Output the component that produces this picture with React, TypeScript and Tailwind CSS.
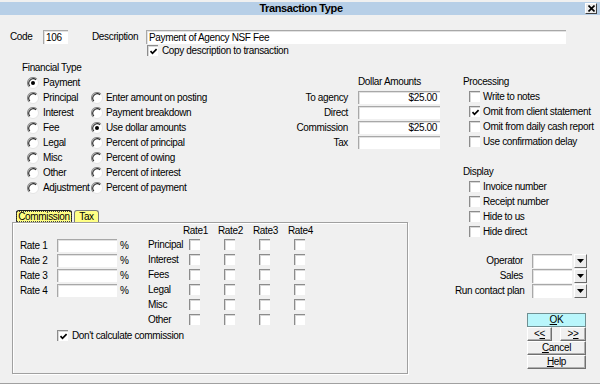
import React from "react";

function Radio({ checked = false }: { checked?: boolean }) {
  return (
    <svg width="12" height="12" viewBox="0 0 12 12" className="shrink-0">
      <circle cx="6" cy="6" r="5.5" fill="#ffffff" />
      <path d="M9.9 2.1 A5.5 5.5 0 0 0 2.1 9.9" stroke="#8a8a8a" strokeWidth="1.1" fill="none" />
      <path d="M9.1 2.9 A4.4 4.4 0 0 0 2.9 9.1" stroke="#2a2a2a" strokeWidth="1.1" fill="none" />
      <path d="M9.9 2.1 A5.5 5.5 0 0 1 2.1 9.9" stroke="#e4e4e4" strokeWidth="1" fill="none" />
      {checked && <circle cx="6" cy="6" r="2" fill="#000000" />}
    </svg>
  );
}

function Check({ checked = false }: { checked?: boolean }) {
  return (
    <div className="w-[11px] h-[11px] shrink-0 bg-white border-t border-l border-[#8c8c8c] shadow-[inset_1px_1px_0_#d8d8d8] flex items-center justify-center">
      {checked && (
        <svg width="9" height="9" viewBox="0 0 9 9">
          <path d="M1.5 4.2 L3.5 6.3 L7.6 2.1" stroke="#000" strokeWidth="1.7" fill="none" />
        </svg>
      )}
    </div>
  );
}

function Field({ w, h = 13, value = "", right = false }: { w: string; h?: number; value?: string; right?: boolean }) {
  return (
    <div
      className={`${w} ${h === 14 ? "h-[14px] leading-[13px]" : "h-[13px] leading-[12px]"} bg-white border-t border-l border-[#a8a8a8] shadow-[inset_1px_1px_0_#e2e2e2] whitespace-nowrap overflow-hidden ${right ? "text-right pr-[3px]" : "pl-[2px]"}`}
    >
      {value}
    </div>
  );
}

function DropBtn() {
  return (
    <div className="ml-[2px] w-[13px] h-[14px] bg-[#ececec] border-t border-l border-white border-b border-r border-b-[#6a6a6a] border-r-[#6a6a6a] flex items-center justify-center">
      <svg width="7" height="4" viewBox="0 0 7 4">
        <path d="M0 0 H7 L3.5 4 Z" fill="#000" />
      </svg>
    </div>
  );
}

function Btn({ children, cls = "" }: { children: React.ReactNode; cls?: string }) {
  return (
    <div
      className={`h-[14px] leading-[12px] text-center bg-[#f0f0f0] border-t border-l border-white border-b border-r border-b-[#707070] border-r-[#707070] shadow-[inset_-1px_-1px_0_#b0b0b0] ${cls}`}
    >
      {children}
    </div>
  );
}

const col1 = ["Payment", "Principal", "Interest", "Fee", "Legal", "Misc", "Other", "Adjustment"];
const col2 = [
  "Enter amount on posting",
  "Payment breakdown",
  "Use dollar amounts",
  "Percent of principal",
  "Percent of owing",
  "Percent of interest",
  "Percent of payment",
];
const dollars: [string, string][] = [
  ["To agency", "$25.00"],
  ["Direct", ""],
  ["Commission", "$25.00"],
  ["Tax", ""],
];
const processing: [string, boolean][] = [
  ["Write to notes", false],
  ["Omit from client statement", true],
  ["Omit from daily cash report", false],
  ["Use confirmation delay", false],
];
const display = ["Invoice number", "Receipt number", "Hide to us", "Hide direct"];
const gridRows = ["Principal", "Interest", "Fees", "Legal", "Misc", "Other"];

export default function App() {
  return (
    <div className="w-[600px] h-[385px] bg-[#f0f0f0] flex flex-col text-[10px] tracking-[-0.35px] text-black font-[family-name:'Liberation_Sans',Arial,sans-serif] overflow-hidden">
      {/* Title bar */}
      <div className="h-[2px]" />
      <div className="h-[13px] bg-[#b7cfe7] flex items-center">
        <div className="flex-1" />
        <span className="font-bold text-[11px] tracking-[-0.4px] leading-[13px] pl-[5px]">Transaction Type</span>
        <div className="flex-1 flex justify-end pr-[3px]">
          <div className="w-[12px] h-[11px] bg-[#ececec] border-t border-l border-white border-b border-r border-b-[#404040] border-r-[#404040] flex items-center justify-center">
            <svg width="7" height="7" viewBox="0 0 7 7">
              <path d="M0.5 0.5 L6.5 6.5 M6.5 0.5 L0.5 6.5" stroke="#000" strokeWidth="1.6" />
            </svg>
          </div>
        </div>
      </div>

      {/* Code / Description */}
      <div className="mt-[15px] h-[14px] flex items-center">
        <div className="ml-[10px] w-[33px] leading-[14px]">Code</div>
        <Field w="w-[25px]" h={14} value="106" />
        <div className="ml-[24px] w-[54px] leading-[14px]">Description</div>
        <Field w="w-[420px]" h={14} value="Payment of Agency NSF Fee" />
      </div>
      <div className="h-[13px] flex items-center pl-[147px]">
        <Check checked />
        <span className="ml-[4px] leading-[13px]">Copy description to transaction</span>
      </div>

      {/* Main */}
      <div className="mt-[3px] flex">
        {/* Left column */}
        <div className="w-[455px] shrink-0 flex flex-col">
          <div className="flex items-start">
            {/* Financial type */}
            <div className="ml-[22px] w-[268px] shrink-0">
              <div className="h-[15px] leading-[15px]">Financial Type</div>
              <div className="flex pl-[5px]">
                <div className="w-[64px] shrink-0">
                  {col1.map((t, i) => (
                    <div key={t} className="h-[15px] flex items-center whitespace-nowrap">
                      <Radio checked={i === 0} />
                      <span className="ml-[4px]">{t}</span>
                    </div>
                  ))}
                </div>
                <div className="pt-[15px]">
                  {col2.map((t, i) => (
                    <div key={t} className="h-[15px] flex items-center whitespace-nowrap">
                      <Radio checked={i === 2} />
                      <span className="ml-[3px]">{t}</span>
                    </div>
                  ))}
                </div>
              </div>
            </div>
            {/* Dollar amounts */}
            <div className="mt-[14px] w-[150px] shrink-0">
              <div className="h-[15px] leading-[15px] pl-[68px]">Dollar Amounts</div>
              <div className="mt-[1px]">
                {dollars.map(([l, v]) => (
                  <div key={l} className="h-[15px] flex items-center">
                    <div className="w-[58px] text-right">{l}</div>
                    <div className="ml-[10px]">
                      <Field w="w-[82px]" value={v} right />
                    </div>
                  </div>
                ))}
              </div>
            </div>
          </div>

          {/* Tabs */}
          <div className="mt-[15px] h-[12px] flex items-end pl-[16px]">
            <div className="w-[56px] h-[12px] bg-[#ffff84] border-t border-l border-r border-[#202020] rounded-t-[3px] flex items-center justify-center">
              <span className="leading-[9px] outline-1 outline-dotted outline-[#404040] px-[1px]">Commission</span>
            </div>
            <div className="ml-[2px] w-[25px] h-[12px] bg-[#ffff84] border-t border-l border-r border-[#7a7a7a] rounded-t-[3px] flex items-center justify-center leading-[10px]">
              Tax
            </div>
          </div>
          <div className="ml-[12px] w-[396px] h-[152px] border border-[#a0a0a0] shadow-[inset_1px_1px_0_#ffffff,1px_1px_0_#ffffff] flex flex-col">
            <div className="flex">
              <div className="w-[135px] shrink-0 pl-[7px] pt-[15px]">
                {[1, 2, 3, 4].map((n) => (
                  <div key={n} className="h-[15px] flex items-center">
                    <div className="w-[37px]">Rate {n}</div>
                    <Field w="w-[60px]" />
                    <span className="ml-[3px]">%</span>
                  </div>
                ))}
              </div>
              <div className="pt-[1px]">
                <div className="h-[13px] leading-[13px] flex pl-[35px]">
                  {[1, 2, 3, 4].map((n) => (
                    <div key={n} className="w-[35px]">Rate{n}</div>
                  ))}
                </div>
                {gridRows.map((r) => (
                  <div key={r} className="h-[15px] flex items-center">
                    <div className="w-[35px] whitespace-nowrap">{r}</div>
                    {[1, 2, 3, 4].map((n) => (
                      <div key={n} className="w-[35px] pl-[6px]">
                        <Check />
                      </div>
                    ))}
                  </div>
                ))}
              </div>
            </div>
            <div className="mt-[1px] h-[15px] flex items-center pl-[44px]">
              <Check checked />
              <span className="ml-[4px]">Don't calculate commission</span>
            </div>
          </div>
        </div>

        {/* Right column */}
        <div className="flex-1 flex flex-col">
          <div className="mt-[14px] h-[15px] leading-[15px] pl-[8px]">Processing</div>
          {processing.map(([t, c]) => (
            <div key={t} className="h-[15px] flex items-center pl-[14px] whitespace-nowrap">
              <Check checked={c} />
              <span className="ml-[3px]">{t}</span>
            </div>
          ))}
          <div className="mt-[15px] h-[15px] leading-[15px] pl-[8px]">Display</div>
          {display.map((t) => (
            <div key={t} className="h-[15px] flex items-center pl-[14px] whitespace-nowrap">
              <Check />
              <span className="ml-[3px]">{t}</span>
            </div>
          ))}
          <div className="mt-[14px]">
            {["Operator", "Sales", "Run contact plan"].map((t) => (
              <div key={t} className="h-[15px] flex items-center">
                <div className="w-[68px] text-right whitespace-nowrap">{t}</div>
                <div className="ml-[9px]">
                  <Field w="w-[40px]" h={14} />
                </div>
                <DropBtn />
              </div>
            ))}
          </div>
          <div className="mt-[15px] ml-[72px] w-[59px] flex flex-col">
            <div className="h-[14px] leading-[12px] text-center bg-[#b9f6fb] border border-[#6f8f92]">
              <span className="underline">O</span>K
            </div>
            <div className="flex justify-between">
              <Btn cls="w-[25px]">
                &lt;<span className="underline">&lt;</span>
              </Btn>
              <Btn cls="w-[26px]">
                &gt;<span className="underline">&gt;</span>
              </Btn>
            </div>
            <Btn>
              <span className="underline">C</span>ancel
            </Btn>
            <Btn>
              <span className="underline">H</span>elp
            </Btn>
          </div>
        </div>
      </div>

      <div className="mt-auto h-[1px] bg-[#a0a0a0]" />
      <div className="h-[1px] bg-white" />
    </div>
  );
}
